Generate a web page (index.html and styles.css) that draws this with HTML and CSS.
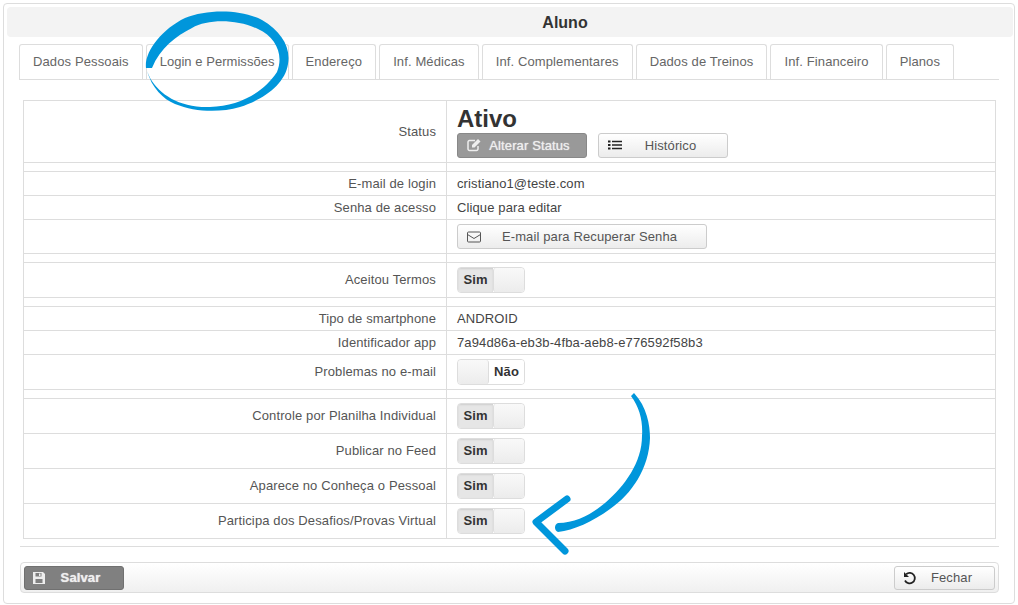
FILE: index.html
```html
<!DOCTYPE html>
<html lang="en">
<head>
    <meta charset="UTF-8">
    <title>Aluno</title>
    <link rel="stylesheet" href="styles.css">
</head>
<body>
    <div class="panel">
        <div class="panel-title">Aluno</div>
        <div class="content">
            <ul class="tabs">
                <li>Dados Pessoais</li>
                <li class="tab-login">Login e Permissões</li>
                <li>Endereço</li>
                <li>Inf. Médicas</li>
                <li>Inf. Complementares</li>
                <li>Dados de Treinos</li>
                <li>Inf. Financeiro</li>
                <li>Planos</li>
            </ul>
            <table class="form-table">
                <tr class="row-status">
                    <th>Status</th>
                    <td>
                        <div class="status-name">Ativo</div>
                        <div class="status-actions">
                            <button class="btn btn-dark btn-status">
                                <svg class="icon" viewBox="0 0 14 14"><path d="M11 8v3a1.500 1.500 0 0 1-1.500 1.500H2.500A1.500 1.500 0 0 1 1 11V4a1.500 1.500 0 0 1 1.500-1.500H8" fill="none" stroke="currentColor" stroke-width="1.500"/><path d="M5 7l6-6 2.500 2.500-6 6H5z" fill="currentColor"/></svg>
                                <span>Alterar Status</span>
                            </button>
                            <button class="btn btn-status">
                                <svg class="icon" viewBox="0 0 14 14"><path d="M0 2.500h2.500v2H0zM0 6h2.500v2H0zM0 9.500h2.500v2H0zM4 2.800h10v1.400H4zM4 6.300h10v1.400H4zM4 9.800h10v1.400H4z" fill="#222"/></svg>
                                <span>Histórico</span>
                            </button>
                        </div>
                    </td>
                </tr>
                <tr class="row-gap"><th></th><td></td></tr>
                <tr class="row-text"><th>E-mail de login</th><td>cristiano1@teste.com</td></tr>
                <tr class="row-text"><th>Senha de acesso</th><td>Clique para editar</td></tr>
                <tr class="row-recover">
                    <th></th>
                    <td>
                        <button class="btn btn-recover">
                            <svg class="icon" viewBox="0 0 14 14"><rect x="0.500" y="2" width="13" height="10" rx="1" fill="none" stroke="currentColor"/><path d="M0.500 4.500L7 8.500l6.500-4" fill="none" stroke="currentColor"/></svg>
                            <span>E-mail para Recuperar Senha</span>
                        </button>
                    </td>
                </tr>
                <tr class="row-gap"><th></th><td></td></tr>
                <tr class="row-control"><th>Aceitou Termos</th><td><div class="toggle"><b>Sim</b><i></i></div></td></tr>
                <tr class="row-gap"><th></th><td></td></tr>
                <tr class="row-text"><th>Tipo de smartphone</th><td>ANDROID</td></tr>
                <tr class="row-text"><th>Identificador app</th><td>7a94d86a-eb3b-4fba-aeb8-e776592f58b3</td></tr>
                <tr class="row-control"><th>Problemas no e-mail</th><td><div class="toggle toggle-off"><i></i><b>Não</b></div></td></tr>
                <tr class="row-gap"><th></th><td></td></tr>
                <tr class="row-control"><th>Controle por Planilha Individual</th><td><div class="toggle"><b>Sim</b><i></i></div></td></tr>
                <tr class="row-control"><th>Publicar no Feed</th><td><div class="toggle"><b>Sim</b><i></i></div></td></tr>
                <tr class="row-control"><th>Aparece no Conheça o Pessoal</th><td><div class="toggle"><b>Sim</b><i></i></div></td></tr>
                <tr class="row-control"><th>Participa dos Desafios/Provas Virtual</th><td><div class="toggle"><b>Sim</b><i></i></div></td></tr>
            </table>
            <hr class="divider">
            <div class="footer-bar">
                <button class="btn btn-dark btn-save">
                    <svg class="icon" viewBox="0 0 14 14"><path fill-rule="evenodd" d="M1 1h10l2 2v10H1zM3.500 2v3.500h6V2zM7 2.500h1.500v2.500H7zM3.500 8v4h7V8z" fill="currentColor"/></svg>
                    <span>Salvar</span>
                </button>
                <button class="btn btn-close">
                    <svg class="icon" viewBox="0 0 14 14"><path d="M3.200 3.200A5.200 5.200 0 1 1 2 9.500" fill="none" stroke="#222" stroke-width="1.800"/><path d="M1 1v5h5z" fill="#222"/></svg>
                    <span>Fechar</span>
                </button>
            </div>
        </div>
    </div>

    <!-- blue marks drawn on top of the screenshot -->
    <svg class="marks" viewBox="0 0 1018 605">
        <path fill="#0096db" d="M146 68C144 52 162 29 185 18C207 9 241 9 262 20C281 31 291 47 288 64C285 85 262 100 240 107C219 113 195 112 175 104C163 99 152 88 147 71L150 78C160 95 180 108 210 107C240 106 264 92 277 72C284 55 276 37 258 29C236 19 208 19 192 28C176 36 160 48 152 68Z"/>
        <path fill="#0096db" d="M631 396L634 393C647 407 650 425 650 438C649 468 632 494 610 509C592 522 574 530 558 532C554 531 554 524 558 523C576 523 592 514 605 503C625 486 642 462 642 436C643 422 640 408 631 396Z"/>
        <path fill="none" stroke="#0096db" stroke-width="7" stroke-linecap="round" stroke-linejoin="round" d="M567 499L536 522L565 551"/>
    </svg>
</body>
</html>
```
FILE: styles.css
```css
* {
    box-sizing: border-box;
}

html, body {
    margin: 0;
    height: 100%;
    background: #fff;
    color: #444;
    font-family: "Liberation Sans", Arial, sans-serif;
    font-size: 13px;
    letter-spacing: 0.12px;
    overflow: hidden;
}

.panel {
    position: relative;
    width: 1012px;
    height: 601px;
    margin: 3px 0 0 3px;
    padding: 3px 1px 3px 3px;
    border: 1px solid #ddd;
    border-radius: 4px;
}

.panel-title {
    height: 30px;
    padding-left: 110px;
    background: #f3f3f3;
    border-radius: 4px;
    color: #333;
    font-size: 16px;
    font-weight: bold;
    letter-spacing: 0;
    line-height: 31px;
    text-align: center;
}

.content {
    padding: 7px 14px 0 12px;
}

.tabs {
    display: flex;
    gap: 3px;
    height: 36px;
    margin: 0;
    padding: 0;
    border-bottom: 1px solid #ddd;
    list-style: none;
}

.tabs li {
    height: 35px;
    padding: 0 13px;
    border: 1px solid #ddd;
    border-bottom: 0;
    border-radius: 3px 3px 0 0;
    color: #666;
    letter-spacing: 0.12px;
    line-height: 34px;
    white-space: nowrap;
}

.tabs .tab-login {
    letter-spacing: 0.04px;
}

.form-table {
    width: 973px;
    margin: 20px 0 0 4px;
    border-collapse: collapse;
    table-layout: fixed;
}

.form-table th,
.form-table td {
    padding: 0;
    border: 1px solid #ddd;
}

.form-table th {
    width: 423px;
    padding-right: 10px;
    color: #555;
    font-weight: normal;
    text-align: right;
}

.form-table td {
    padding-left: 10px;
}

.row-status { height: 62px; }
.row-gap { height: 9px; }
.row-text { height: 24px; }
.row-recover { height: 34px; }
.row-control { height: 35px; }

.form-table .row-control th {
    padding-bottom: 2px;
}

.status-name {
    margin-bottom: 1px;
    color: #333;
    font-size: 24px;
    font-weight: bold;
    letter-spacing: 0;
    line-height: 26px;
}

.status-actions {
    display: flex;
    gap: 11px;
}

.btn {
    display: flex;
    align-items: center;
    height: 25px;
    padding: 0 0 0 9px;
    border: 1px solid #ccc;
    border-radius: 3px;
    background: linear-gradient(#fff, #ececec);
    color: #555;
    font-family: inherit;
    font-size: 13px;
    letter-spacing: inherit;
}

.btn span {
    flex: 1;
    margin-right: 8px;
    text-align: center;
}

.btn .icon {
    flex: none;
    width: 14px;
    height: 14px;
}

.btn-dark {
    border-color: #888;
    background: #999;
    color: #eee;
    text-shadow: 0 0 1px #eee;
}

.btn-status { width: 130px; }
.btn-recover { width: 250px; }

.btn-save {
    width: 100px;
    height: 24px;
    padding-left: 7px;
    border-color: #707070;
    background: #808080;
    font-weight: bold;
}

.btn-close {
    width: 101px;
    height: 24px;
    padding-left: 8px;
}

.toggle {
    display: flex;
    width: 68px;
    height: 26px;
    border: 1px solid #ddd;
    border-radius: 4px;
    overflow: hidden;
    color: #333;
    line-height: 24px;
}

.toggle b {
    width: 35px;
    background: #e6e6e6;
    box-shadow: inset 0 1px 2px rgba(0, 0, 0, 0.1);
    text-align: center;
}

.toggle i {
    flex: 1;
    border-left: 1px solid #ddd;
    border-radius: 3px;
    background: linear-gradient(#f9f9f9, #ececec);
}

.toggle-off b {
    background: #fff;
    box-shadow: none;
}

.toggle-off i {
    border-left: 0;
    border-right: 1px solid #ddd;
}

.divider {
    height: 1px;
    margin: 7px 0 15px 1px;
    border: 0;
    background: #ddd;
}

.footer-bar {
    display: flex;
    justify-content: space-between;
    align-items: center;
    height: 31px;
    margin-left: 1px;
    padding: 0 3px;
    border: 1px solid #ddd;
    border-radius: 4px;
    background: linear-gradient(#fff, #f0f0f0);
}

.marks {
    position: absolute;
    top: 0;
    left: 0;
    width: 1018px;
    height: 605px;
    pointer-events: none;
}
```
